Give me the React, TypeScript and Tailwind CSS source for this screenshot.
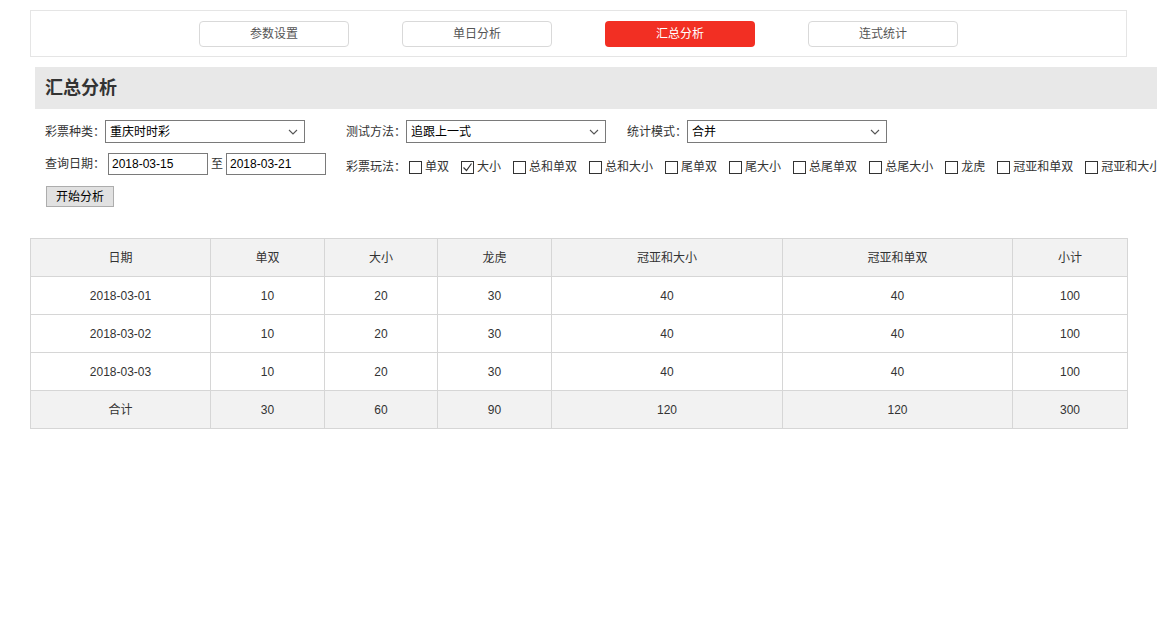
import React from "react";

const tabs = ["参数设置", "单日分析", "汇总分析", "连式统计"];
const plays = ["单双", "大小", "总和单双", "总和大小", "尾单双", "尾大小", "总尾单双", "总尾大小", "龙虎", "冠亚和单双", "冠亚和大小"];
const cols = [
  { t: "日期", w: 180 },
  { t: "单双", w: 114 },
  { t: "大小", w: 113 },
  { t: "龙虎", w: 114 },
  { t: "冠亚和大小", w: 231 },
  { t: "冠亚和单双", w: 230 },
  { t: "小计", w: 115 },
];
const rows = [
  ["2018-03-01", "10", "20", "30", "40", "40", "100"],
  ["2018-03-02", "10", "20", "30", "40", "40", "100"],
  ["2018-03-03", "10", "20", "30", "40", "40", "100"],
];
const total = ["合计", "30", "60", "90", "120", "120", "300"];

function Select({ value }: { value: string }) {
  return (
    <div className="flex items-center justify-between w-[200px] h-[23px] border border-[#7a7a7a] bg-white pl-[4px] pr-[6px] text-[12px] text-black">
      <span>{value}</span>
      <svg width="10" height="6" viewBox="0 0 10 6" fill="none">
        <path d="M1 1l4 4 4-4" stroke="#555" strokeWidth="1.1" />
      </svg>
    </div>
  );
}

function Check({ label, checked }: { label: string; checked?: boolean }) {
  return (
    <label className="flex items-center shrink-0 mr-[12px] whitespace-nowrap">
      <span className="w-[13px] h-[13px] border border-[#333] bg-white mr-[3px] flex items-center justify-center">
        {checked && (
          <svg width="11" height="11" viewBox="0 0 11 11" fill="none">
            <path d="M1.5 5.5l3 3 5-7" stroke="#333" strokeWidth="1.2" />
          </svg>
        )}
      </span>
      <span>{label}</span>
    </label>
  );
}

export default function App() {
  return (
    <div
      className="w-[1157px] h-[634px] overflow-hidden bg-white text-[#333] text-[12px]"
      style={{ fontFamily: '"Liberation Sans", "Noto Sans CJK SC", sans-serif' }}
    >
      {/* 顶部导航 */}
      <div className="ml-[30px] mt-[10px] w-[1097px] h-[47px] border border-[#e5e5e5] flex items-center justify-center gap-[53px]">
        {tabs.map((t) =>
          t === "汇总分析" ? (
            <button key={t} className="w-[150px] h-[26px] rounded-[4px] bg-[#f22f23] text-white text-[12px]">
              {t}
            </button>
          ) : (
            <button key={t} className="w-[150px] h-[26px] rounded-[4px] border border-[#d9d9d9] bg-white text-[#555] text-[12px]">
              {t}
            </button>
          )
        )}
      </div>

      {/* 标题 */}
      <div className="ml-[35px] mt-[10px] w-[1130px] h-[42px] bg-[#e8e8e8] flex items-center pl-[10px]">
        <h2 className="text-[18px] font-bold text-[#333]">汇总分析</h2>
      </div>

      {/* 查询条件 */}
      <div className="pl-[45px] whitespace-nowrap">
        <div className="flex items-center h-[23px] mt-[11px]">
          <span className="w-[60px] shrink-0">彩票种类：</span>
          <Select value="重庆时时彩" />
          <span className="w-[60px] shrink-0 ml-[41px]">测试方法：</span>
          <Select value="追跟上一式" />
          <span className="w-[60px] shrink-0 ml-[21px]">统计模式：</span>
          <Select value="合并" />
        </div>

        <div className="flex items-center h-[22px] mt-[10px]">
          <span className="w-[60px] shrink-0">查询日期：</span>
          <div className="ml-[3px] w-[100px] h-[22px] border border-[#7a7a7a] pl-[3px] flex items-center text-black shrink-0">2018-03-15</div>
          <span className="ml-[3px] shrink-0">至</span>
          <div className="ml-[3px] w-[100px] h-[22px] border border-[#7a7a7a] pl-[3px] flex items-center text-black shrink-0">2018-03-21</div>
          <div className="flex items-center pt-[6px] ml-[20px]">
            <span className="w-[60px] shrink-0">彩票玩法：</span>
            <div className="flex items-center ml-[3px]">
              {plays.map((p) => (
                <Check key={p} label={p} checked={p === "大小"} />
              ))}
            </div>
          </div>
        </div>

        <button className="mt-[11px] ml-[1px] h-[21px] px-[9px] border border-[#adadad] bg-[#e1e1e1] text-[12px] text-black flex items-center">
          开始分析
        </button>
      </div>

      {/* 统计表 */}
      <table className="ml-[30px] mt-[31px] w-[1097px] table-fixed border-collapse text-center text-[12px] text-[#333]">
        <colgroup>
          {cols.map((c) => (
            <col key={c.t} style={{ width: c.w }} />
          ))}
        </colgroup>
        <thead>
          <tr className="h-[38px] bg-[#f2f2f2]">
            {cols.map((c) => (
              <th key={c.t} className="border border-[#d6d6d6] font-normal">
                {c.t}
              </th>
            ))}
          </tr>
        </thead>
        <tbody>
          {rows.map((r, i) => (
            <tr key={i} className="h-[38px]">
              {r.map((v, j) => (
                <td key={j} className="border border-[#d6d6d6]">
                  {v}
                </td>
              ))}
            </tr>
          ))}
          <tr className="h-[38px] bg-[#f2f2f2]">
            {total.map((v, j) => (
              <td key={j} className="border border-[#d6d6d6]">
                {v}
              </td>
            ))}
          </tr>
        </tbody>
      </table>
    </div>
  );
}
